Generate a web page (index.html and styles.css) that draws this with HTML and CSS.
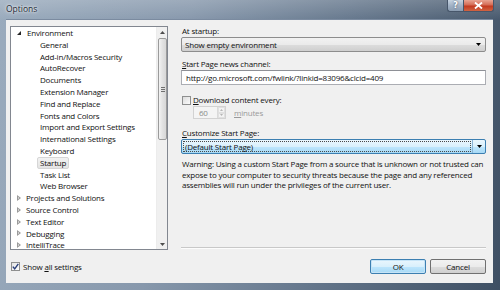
FILE: index.html
```html
<!DOCTYPE html>
<html>
<head>
<meta charset="utf-8">
<title>Options</title>
<link rel="stylesheet" href="styles.css">
</head>
<body>
<div class="window">
  <div class="titlebar">
    <span class="title">Options</span>
    <div class="caption-btns">
      <div class="cap help">?</div>
      <div class="cap close">
        <svg width="9" height="7" viewBox="0 0 9 7"><path d="M1 0.5 L8 6.5 M8 0.5 L1 6.5" stroke="#fff" stroke-width="1.8" fill="none"/></svg>
      </div>
    </div>
  </div>
  <div class="client">
    <div class="left">
      <div class="tree">
        <ul class="items">
          <li class="node"><span class="tw open"></span>Environment</li>
          <li class="child">General</li>
          <li class="child">Add-in/Macros Security</li>
          <li class="child">AutoRecover</li>
          <li class="child">Documents</li>
          <li class="child">Extension Manager</li>
          <li class="child">Find and Replace</li>
          <li class="child">Fonts and Colors</li>
          <li class="child">Import and Export Settings</li>
          <li class="child">International Settings</li>
          <li class="child">Keyboard</li>
          <li class="child"><span class="sel">Startup</span></li>
          <li class="child">Task List</li>
          <li class="child">Web Browser</li>
          <li class="node"><span class="tw closed"></span>Projects and Solutions</li>
          <li class="node"><span class="tw closed"></span>Source Control</li>
          <li class="node"><span class="tw closed"></span>Text Editor</li>
          <li class="node"><span class="tw closed"></span>Debugging</li>
          <li class="node"><span class="tw closed"></span>IntelliTrace</li>
        </ul>
        <div class="vscroll">
          <div class="sarrow"><svg width="5" height="3" viewBox="0 0 5 3"><path d="M0 3 L2.5 0 L5 3 Z" fill="#4d4d4d"/></svg></div>
          <div class="track">
            <div class="thumb"><span class="grip"></span></div>
          </div>
          <div class="sarrow"><svg width="5" height="3" viewBox="0 0 5 3"><path d="M0 0 L2.5 3 L5 0 Z" fill="#4d4d4d"/></svg></div>
        </div>
      </div>
      <div class="showall">
        <span class="chk checked"><svg width="7" height="7" viewBox="0 0 7 7"><path d="M0.8 3.6 L2.7 5.8 L6.3 0.8" stroke="#2a3f7a" stroke-width="1.4" fill="none"/></svg></span>
        <span>Show <u>a</u>ll settings</span>
      </div>
    </div>
    <div class="right">
      <div class="form">
        <div class="label l1">At startup:</div>
        <div class="combo c1">
          <span class="ctext">Show empty environment</span>
          <span class="carrow"><svg width="5" height="3" viewBox="0 0 5 3"><path d="M0 0 L2.5 3 L5 0 Z" fill="#000"/></svg></span>
        </div>
        <div class="label l2"><u>S</u>tart Page news channel:</div>
        <div class="textbox">http://go.microsoft.com/fwlink/?linkid=83096&amp;clcid=409</div>
        <div class="dlrow">
          <span class="chk"></span>
          <span><u>D</u>ownload content every:</span>
        </div>
        <div class="spinrow">
          <div class="spin">
            <span class="spintext">60</span>
            <span class="spinbtns">
              <span class="sb"><svg width="3" height="2" viewBox="0 0 3 2"><path d="M0 2 L1.5 0 L3 2Z" fill="#b5b5b5"/></svg></span>
              <span class="sb"><svg width="3" height="2" viewBox="0 0 3 2"><path d="M0 0 L1.5 2 L3 0Z" fill="#b5b5b5"/></svg></span>
            </span>
          </div>
          <span class="minutes"><u>m</u>inutes</span>
        </div>
        <div class="label l3"><u>C</u>ustomize Start Page:</div>
        <div class="combo c2">
          <span class="focusbox">(Default Start Page)</span>
          <span class="cdiv"></span>
          <span class="carrow"><svg width="5" height="3" viewBox="0 0 5 3"><path d="M0 0 L2.5 3 L5 0 Z" fill="#000"/></svg></span>
        </div>
        <p class="warning">Warning: Using a custom Start Page from a source that is unknown or not trusted can expose to your computer to security threats because the page and any referenced assemblies will run under the privileges of the current user.</p>
      </div>
      <div class="sep"></div>
      <div class="buttons">
        <div class="btn ok">OK</div>
        <div class="btn">Cancel</div>
      </div>
    </div>
  </div>
</div>
</body>
</html>
```

FILE: styles.css
```css
html, body {
  margin: 0;
  padding: 0;
  width: 500px;
  height: 290px;
  overflow: hidden;
  background: #3d4b5c;
}

.window {
  width: 500px;
  height: 290px;
  box-sizing: border-box;
  display: flex;
  flex-direction: column;
  padding: 0 7px 7px 6px;
  background:
    linear-gradient(180deg, rgba(255,255,255,0.18) 0px, rgba(255,255,255,0) 20px),
    linear-gradient(100deg, #9aabbd 0%, #8798ac 35%, #65778c 65%, #3e4f63 100%);
  font-family: "Open Sans", "Noto Sans", sans-serif;
  font-size: 8px;
  letter-spacing: -0.2px;
  color: #111;
}

.titlebar {
  height: 19px;
  flex: none;
  display: flex;
  justify-content: space-between;
  align-items: flex-start;
}

.title {
  margin-top: 3px;
  font-size: 8.5px;
  letter-spacing: 0;
  line-height: 12px;
  color: #1f2a36;
  text-shadow: 0 0 4px rgba(255,255,255,0.9), 0 0 2px rgba(255,255,255,0.8);
}

.caption-btns {
  display: flex;
  margin-right: -1px;
}

.cap {
  height: 12px;
  box-sizing: border-box;
  display: flex;
  align-items: center;
  justify-content: center;
  border: 1px solid #47566a;
  border-top: none;
}

.help {
  width: 16px;
  border-radius: 0 0 0 3px;
  background: linear-gradient(180deg, #c7d3e0 0%, #a3b3c6 50%, #8a9cb1 100%);
  color: #fff;
  font-family: "DejaVu Sans", sans-serif;
  font-weight: bold;
  font-size: 8px;
  text-shadow: 0 0 2px #2d3a4a;
  border-right: none;
}

.close {
  width: 31px;
  border-radius: 0 0 3px 0;
  background: linear-gradient(180deg, #e8a493 0%, #d46b55 45%, #c2391f 55%, #d06443 100%);
}

.client {
  flex: 1;
  display: flex;
  background: #f0f0f0;
  border-top: 1px solid #7b8ba0;
  min-height: 0;
}

.left {
  width: 158px;
  margin-left: 4px;
  display: flex;
  flex-direction: column;
}

.tree {
  margin-top: 6px;
  height: 224px;
  box-sizing: border-box;
  border: 1px solid #828790;
  background: #fff;
  display: flex;
  overflow: hidden;
}

.items {
  list-style: none;
  margin: 0;
  padding: 0;
  flex: 1;
  overflow: hidden;
}

.items li {
  height: 11.8px;
  line-height: 11.8px;
  white-space: nowrap;
  display: flex;
  align-items: center;
}

.node {
  padding-left: 16px;
}

.child {
  padding-left: 29px;
}

.tw {
  width: 0;
  height: 0;
  margin-left: -10px;
  margin-right: 6px;
}

.tw.open {
  border-left: 4px solid transparent;
  border-bottom: 4px solid #262626;
  margin-top: 1px;
}

.tw.closed {
  width: 3px;
  height: 6px;
  border: none;
  background: none;
  position: relative;
}

.tw.closed::before {
  content: "";
  display: block;
  width: 0;
  height: 0;
  border-top: 3.5px solid transparent;
  border-bottom: 3.5px solid transparent;
  border-left: 4px solid #9a9a9a;
}

.tw.closed::after {
  content: "";
  position: absolute;
  left: 1px;
  top: 2px;
  width: 0;
  height: 0;
  border-top: 1.5px solid transparent;
  border-bottom: 1.5px solid transparent;
  border-left: 1.7px solid #fff;
}

.sel {
  margin-left: -3px;
  padding: 0 2px;
  line-height: 10px;
  background: linear-gradient(180deg, #f2f2f2, #e3e3e3);
  border: 1px solid #d6d6d6;
  border-radius: 2px;
}

.vscroll {
  width: 10px;
  flex: none;
  display: flex;
  flex-direction: column;
  background: #f0f0f0;
  border-left: 1px solid #ececec;
}

.sarrow {
  height: 10px;
  display: flex;
  align-items: center;
  justify-content: center;
  flex: none;
}

.track {
  flex: 1;
  padding-top: 1px;
}

.thumb {
  height: 102px;
  margin: 0 0 0 1px;
  box-sizing: border-box;
  border: 1px solid #9b9b9b;
  border-radius: 2px;
  background: linear-gradient(90deg, #f3f3f3, #e2e2e2 50%, #d8d8d8);
  display: flex;
  align-items: center;
  justify-content: center;
}

.grip {
  width: 4px;
  height: 5px;
  background: repeating-linear-gradient(180deg, #6f6f6f 0 1px, transparent 1px 2px);
}

.showall {
  margin-top: 11px;
  display: flex;
  align-items: center;
  gap: 3px;
  margin-left: 1px;
  line-height: 11px;
}

.chk {
  width: 9px;
  height: 9px;
  box-sizing: border-box;
  border: 1px solid #8e8f8f;
  background: linear-gradient(135deg, #dcdcdc, #fbfbfb);
  display: flex;
  align-items: center;
  justify-content: center;
  flex: none;
}

.chk.checked {
  background: linear-gradient(135deg, #e4e4e4, #ffffff);
}

.right {
  flex: 1;
  margin-left: 13px;
  margin-right: 7px;
  display: flex;
  flex-direction: column;
}

.form {
  flex: 1;
  display: flex;
  flex-direction: column;
}

.label {
  line-height: 11px;
  height: 11px;
  padding-left: 1px;
}

.l1 { margin-top: 5px; }
.l2 { margin-top: 6px; }
.l3 { margin-top: 8px; }

.combo {
  height: 15px;
  box-sizing: border-box;
  margin-top: 1px;
  display: flex;
  align-items: center;
  border-radius: 2px;
}

.c1 {
  border: 1px solid #8d8d8d;
  background: linear-gradient(180deg, #f2f2f2 0%, #ebebeb 50%, #dddddd 51%, #cfcfcf 100%);
  padding-left: 3px;
}

.ctext {
  flex: 1;
}

.carrow {
  width: 13px;
  display: flex;
  justify-content: center;
  align-items: center;
}

.textbox {
  margin-top: 1px;
  height: 15px;
  box-sizing: border-box;
  border: 1px solid #abadb3;
  border-top-color: #8e9096;
  background: #fff;
  padding-left: 4px;
  line-height: 13px;
}

.dlrow {
  margin-top: 9px;
  height: 11px;
  display: flex;
  align-items: center;
  gap: 2px;
  padding-left: 1px;
}

.dlrow .chk {
  margin-top: 1px;
}

.spinrow {
  margin-top: 1px;
  height: 13px;
  display: flex;
  align-items: center;
  padding-left: 12px;
  gap: 8px;
}

.spin {
  width: 33px;
  height: 13px;
  box-sizing: border-box;
  border: 1px solid #d2d2d2;
  background: #f4f4f4;
  display: flex;
}

.spintext {
  flex: 1;
  padding-left: 5px;
  line-height: 11px;
  color: #8a8a8a;
}

.spinbtns {
  width: 7px;
  display: flex;
  flex-direction: column;
  border-left: 1px solid #dadada;
}

.sb {
  flex: 1;
  display: flex;
  align-items: center;
  justify-content: center;
  background: #f3f3f3;
  border: 1px solid #e0e0e0;
}

.minutes {
  color: #9a9a9a;
  line-height: 11px;
}

.c2 {
  border: 1px solid #3c7fb1;
  background: linear-gradient(180deg, #eaf6fd 0%, #d9f0fc 50%, #bee6fd 51%, #a7d9f5 100%);
  padding-left: 1px;
}

.focusbox {
  flex: 1;
  height: 11px;
  line-height: 10px;
  box-sizing: border-box;
  border: 1px dotted #4a4a4a;
  padding-left: 1px;
}

.cdiv {
  width: 1px;
  height: 13px;
  background: #8ab4d6;
  margin-left: 1px;
}

.c2 .carrow {
  width: 12px;
}

.warning {
  margin: 5px 0 0 0;
  padding-left: 1px;
  line-height: 10.7px;
}

.sep {
  height: 1px;
  background: #c8c8c8;
  border-bottom: 1px solid #fcfcfc;
  flex: none;
}

.buttons {
  display: flex;
  justify-content: flex-end;
  gap: 4px;
  margin-top: 10px;
  margin-bottom: 9px;
}

.btn {
  width: 56px;
  height: 15px;
  box-sizing: border-box;
  border: 1px solid #707070;
  border-radius: 2px;
  background: linear-gradient(180deg, #f2f2f2 0%, #ebebeb 50%, #dddddd 51%, #cfcfcf 100%);
  text-align: center;
  line-height: 13px;
}

.btn.ok {
  border-color: #3c7fb1;
  background: linear-gradient(180deg, #eaf6fd 0%, #d9f0fc 50%, #bee6fd 51%, #a7d9f5 100%);
  box-shadow: inset 0 0 0 1px #c6e4f7;
}
```
